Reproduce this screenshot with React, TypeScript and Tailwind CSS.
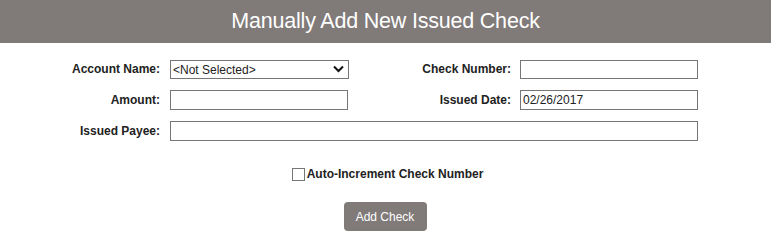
import { useState } from 'react';

export default function App() {
  const [autoIncrement, setAutoIncrement] = useState(false);
  const [issuedDate, setIssuedDate] = useState('02/26/2017');

  return (
    <div className="w-[771px] h-[247px] bg-white font-['Liberation_Sans',Arial,sans-serif] text-[#222]">
      <div className="h-[43px] bg-[#807a79] flex items-center justify-center">
        <h1 className="text-[21.5px] text-white leading-none tracking-[-0.2px]">Manually Add New Issued Check</h1>
      </div>

      <div className="grid grid-cols-[170px_179px_171px_178px] grid-rows-[20px_20px_20px] gap-y-[11px] mt-[16px]">
        <label className="text-[12px] font-bold text-right pr-[10px] self-center">Account Name:</label>
        <div className="relative h-[19px] mt-px border border-[#767676] flex items-center">
          <select className="appearance-none w-full h-full pl-[2px] text-[12px] text-[#222] bg-transparent outline-none">
            <option>&lt;Not Selected&gt;</option>
          </select>
          <svg className="absolute right-[4px] top-[4px] pointer-events-none" width="11" height="8" viewBox="0 0 11 8">
            <path d="M1 1.5 L5.5 6 L10 1.5" fill="none" stroke="#111" strokeWidth="2" />
          </svg>
        </div>
        <label className="text-[12px] font-bold text-right pr-[9px] self-center">Check Number:</label>
        <input className="h-[19px] mt-px border border-[#767676] px-[2px] text-[12px]" />

        <label className="text-[12px] font-bold text-right pr-[10px] self-center">Amount:</label>
        <input className="h-[20px] w-[178px] border border-[#767676] px-[2px] text-[12px]" />
        <label className="text-[12px] font-bold text-right pr-[9px] self-center">Issued Date:</label>
        <input
          className="h-[20px] border border-[#767676] px-[2px] text-[12px] text-[#222]"
          value={issuedDate}
          onChange={(e) => setIssuedDate(e.target.value)}
        />

        <label className="text-[12px] font-bold text-right pr-[10px] self-center">Issued Payee:</label>
        <input className="col-span-3 h-[20px] border border-[#767676] px-[2px] text-[12px]" />
      </div>

      <div className="flex justify-center mt-[24px] pl-[4px]">
        <label className="flex items-center gap-[2px] text-[12px] font-bold cursor-pointer">
          <input
            type="checkbox"
            checked={autoIncrement}
            onChange={(e) => setAutoIncrement(e.target.checked)}
            className="appearance-none w-[13px] h-[13px] border border-[#767676] bg-white checked:bg-[#0075ff]"
          />
          Auto-Increment Check Number
        </label>
      </div>

      <div className="flex justify-center mt-[19px]">
        <button className="w-[83px] h-[29px] ml-[-1px] rounded-[4px] bg-[#807a79] text-white text-[12px]">Add Check</button>
      </div>
    </div>
  );
}
